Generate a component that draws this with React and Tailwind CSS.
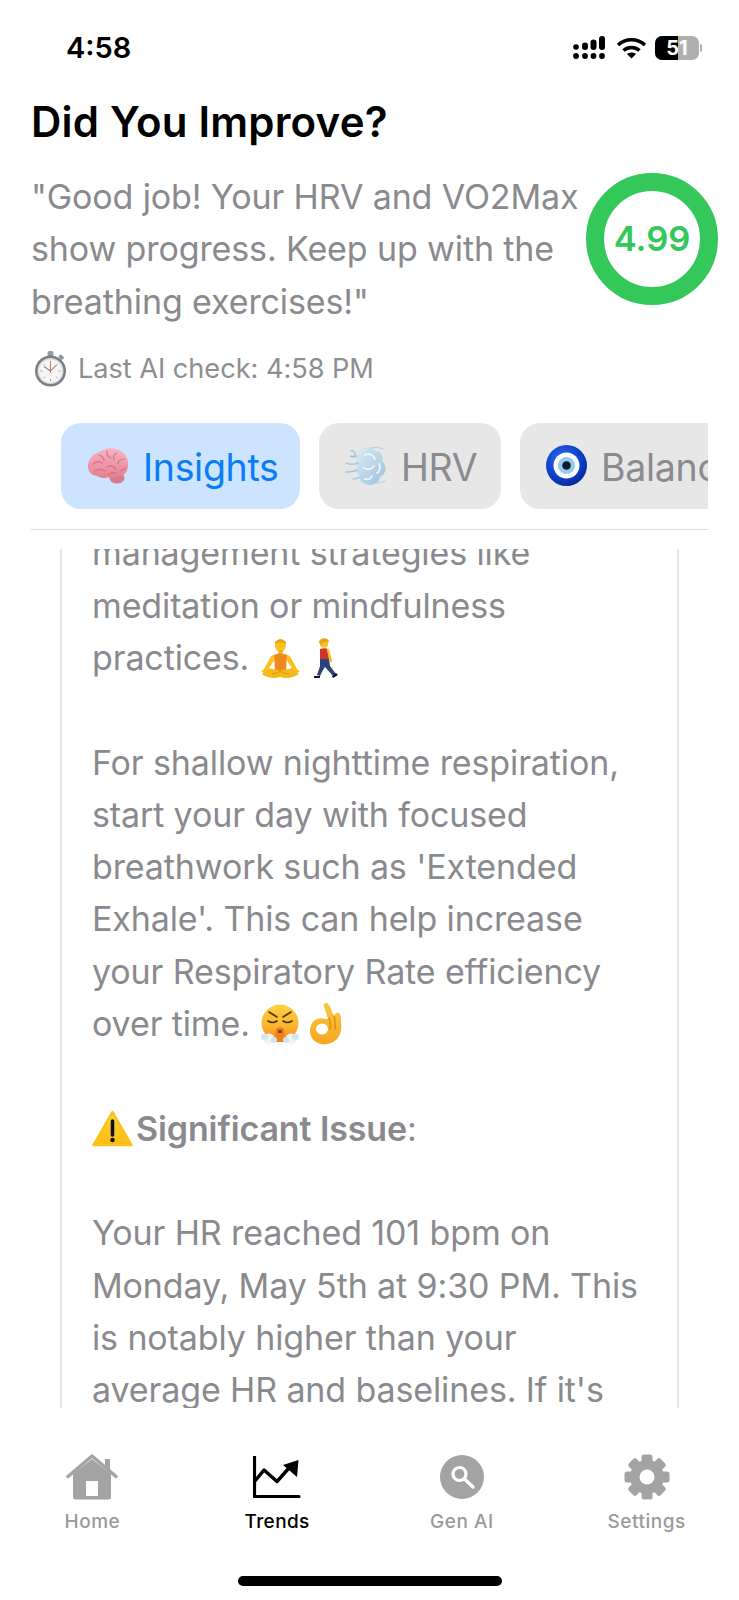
const font = { fontFamily: 'Inter, "Liberation Sans", sans-serif' };

function Signal() {
  return (
    <svg width="33" height="24" viewBox="0 0 33 24">
      <circle cx="3" cy="11" r="2.8" fill="#000" /><rect x="9" y="6.5" width="6" height="7.5" rx="3" fill="#000" /><rect x="17.5" y="3.5" width="6" height="10.5" rx="3" fill="#000" /><rect x="26" y="0" width="6" height="14" rx="3" fill="#000" />
      <circle cx="3" cy="20" r="2.9" fill="#000" /><circle cx="12" cy="20" r="2.9" fill="#000" /><circle cx="20.5" cy="20" r="2.9" fill="#000" /><circle cx="29" cy="20" r="2.9" fill="#000" />
    </svg>
  );
}
function Wifi() {
  return (
    <svg width="31" height="24" viewBox="0 0 31 24" fill="none" stroke="#000" strokeWidth="3.6">
      <path d="M2 9 C9.5 2 21.5 2 29 9" /><path d="M7.5 14.5 C12 10.5 19 10.5 23.5 14.5" />
      <path d="M15.5 22.5 L11 18 C13.5 16 17.5 16 20 18 Z" fill="#000" stroke="none" />
    </svg>
  );
}
function Stopwatch() {
  return (
    <svg width="33" height="36" viewBox="0 0 33 36">
      <rect x="13.500" y="0" width="6" height="5" rx="1.500" fill="#9a9ca3" /><rect x="15" y="4" width="3" height="3" fill="#777" />
      <rect x="25" y="4.500" width="5" height="3.500" rx="1" transform="rotate(42 27.500 6)" fill="#8f9198" />
      <circle cx="16.500" cy="20" r="15.500" fill="#7c7e85" /><circle cx="16.500" cy="20" r="13" fill="#d9dade" /><circle cx="16.500" cy="20" r="11.500" fill="#f7f5f1" />
      <path d="M16.500 10v2M16.500 28v2M6.500 20h2M24.500 20h2M9.500 13l1.200 1.200M23.500 13l-1.200 1.200M9.500 27l1.200-1.200M23.500 27l-1.200-1.200" stroke="#9a9a9a" strokeWidth="1" />
      <path d="M16.500 20L10 15.500M16.500 20L22.500 14" stroke="#666" strokeWidth="1" /><path d="M16.500 12v10" stroke="#c9574a" strokeWidth="0.800" />
    </svg>
  );
}
function Brain() {
  return (
    <svg width="42" height="38" viewBox="0 0 42 38">
      <defs><linearGradient id="brainG" x1="0" y1="0" x2="0" y2="1"><stop offset="0" stopColor="#f9b3c0" /><stop offset="1" stopColor="#e47e92" /></linearGradient></defs>
      <ellipse cx="30" cy="31" rx="7.500" ry="5.500" fill="#d9798c" />
      <path d="M1 21C0 13 6 7 12 5 17 1 26 0 32 3c6 3 10 9 9 16 0 6-4 10-9 10-3 3-8 3-11 1-3 2-8 1-11-1-5 0-8-4-9-8z" fill="url(#brainG)" />
      <path d="M6 17c3-3 7-3 9-1M12 8c3 1 5 3 5 6M20 4c-1 3 1 6 4 7M30 6c-3 1-4 4-3 7M37 12c-3 0-6 2-6 5M8 24c3-2 7-2 10 0M20 20c3-2 7-1 9 2M21 28c2-2 5-3 8-2M33 24c2-1 4-1 5-3" fill="none" stroke="#d2728a" strokeWidth="1.200" strokeLinecap="round" />
    </svg>
  );
}
function Dash() {
  return (
    <svg width="42" height="40" viewBox="0 0 42 40">
      <defs><linearGradient id="dashG" x1="0" y1="0" x2="1" y2="1"><stop offset="0" stopColor="#dcecf6" /><stop offset="1" stopColor="#9cc0da" /></linearGradient></defs>
      <path d="M15 4c4-4 12-4 15 1 6 0 9 5 7 10 5 4 5 13-2 16-1 6-8 10-14 7-5-1-7-5-6-9-5-2-5-6-2-9-3-3-3-7 0-9 0-3 0-5 2-7z" fill="url(#dashG)" />
      <path d="M20 9c4-2 9 0 10 4M34 18c2 3 1 7-2 9M19 22c4 2 8 1 10-2M20 33c3 1 6 0 7-3" fill="none" stroke="#eef6fb" strokeWidth="1.800" strokeLinecap="round" />
      <path d="M1 17c5 2 8 2 12 0M0 26c4 0 8 0 12-2M8 33c3 0 5-1 7-2M6 5a3 3 0 1 1-1 5c2 1 5 1 7 0" fill="none" stroke="#a9c7dc" strokeWidth="1.500" strokeLinecap="round" />
      <path d="M26 2c4-1 8-1 12 1M32 37c3 0 6-1 8-2" fill="none" stroke="#b9d3e5" strokeWidth="1.200" strokeLinecap="round" />
    </svg>
  );
}
function Nazar() {
  return (
    <svg width="41" height="41" viewBox="0 0 41 41">
      <defs><radialGradient id="nazarG" cx="0.4" cy="0.35" r="0.75"><stop offset="0" stopColor="#2b6cf0" /><stop offset="0.7" stopColor="#0a37c0" /><stop offset="1" stopColor="#06207c" /></radialGradient></defs>
      <circle cx="20.500" cy="20.500" r="20.500" fill="url(#nazarG)" /><circle cx="20.500" cy="20.500" r="13" fill="#fdfdfd" /><circle cx="20.500" cy="20.500" r="8.500" fill="#8fcdec" /><circle cx="20.500" cy="20.500" r="4.300" fill="#0e1830" />
    </svg>
  );
}
function Meditate() {
  return (
    <svg width="41" height="42" viewBox="0 0 41 42">
      <ellipse cx="20.500" cy="8.500" rx="5.500" ry="6.500" fill="#fcc21b" /><path d="M15 7c-1-6 12-6 11 0-3-2-8-2-11 0z" fill="#e8a21a" />
      <rect x="18.500" y="13" width="4" height="4" fill="#eeb018" />
      <path d="M14 18c4-2 9-2 13 0l-1 16H15z" fill="#f0891d" />
      <path d="M14 18c-2 0-3 1-4 3L4 32l-3 2 3 2 9-4-4-1 5-7zM27 18c2 0 3 1 4 3l6 11 3 2-3 2-9-4 4-1-5-7z" fill="#fcc21b" />
      <path d="M2 37c4-5 12-6 18-3 7-3 15-2 19 3-6 4-13 5-19 3-6 2-13 1-18-3z" fill="#f7b81c" />
      <path d="M12 37c3 0 6-1 8-3 3 2 6 3 9 3" fill="none" stroke="#d8950f" strokeWidth="1" />
    </svg>
  );
}
function Walker() {
  return (
    <svg width="24" height="41" viewBox="0 0 24 41">
      <circle cx="10" cy="5.500" r="4.300" fill="#fcc21b" /><path d="M5 5c0-6 10-6 10-1-3 0-7 0-7 3z" fill="#e6a61c" />
      <path d="M6 11c3-1 6-1 8 0l1 11H6z" fill="#cf352e" /><path d="M14 12l3 11" stroke="#fcc21b" strokeWidth="2.400" strokeLinecap="round" />
      <path d="M6 21h9l1 7 6 8-3 2-8-9-2 3-3 6-3-1 3-9z" fill="#2a4378" /><path d="M18 38l4-3 2 2-5 3zM0 38h6v2H0z" fill="#14141c" />
    </svg>
  );
}
function Steam() {
  return (
    <svg width="40" height="41" viewBox="0 0 40 41">
      <defs><linearGradient id="steamG" x1="0" y1="0" x2="0" y2="1"><stop offset="0" stopColor="#fcd23f" /><stop offset="0.6" stopColor="#fbb22d" /><stop offset="1" stopColor="#f38a1d" /></linearGradient></defs>
      <circle cx="20" cy="19" r="18.500" fill="url(#steamG)" />
      <path d="M9 8l8 5M31 8l-8 5M8 17c3 2 6 2 9 0M23 17c3 2 6 2 9 0" stroke="#4b3210" strokeWidth="1.600" fill="none" strokeLinecap="round" />
      <path d="M15.500 38V27c0-5 9-5 9 0v11z" fill="#ef7f1c" /><path d="M18 26h4v3h-4z" fill="#8a4412" />
      <circle cx="9" cy="35" r="5.500" fill="#eef5f9" /><circle cx="4.500" cy="33" r="3.500" fill="#d6e6ef" /><circle cx="31" cy="35" r="5.500" fill="#eef5f9" /><circle cx="35.500" cy="33" r="3.500" fill="#d6e6ef" />
      <circle cx="14" cy="36" r="3" fill="#cfe2ec" /><circle cx="26" cy="36" r="3" fill="#cfe2ec" />
    </svg>
  );
}
function Ok() {
  return (
    <svg width="32" height="42" viewBox="0 0 32 42">
      <defs><linearGradient id="okG" x1="0" y1="0" x2="0" y2="1"><stop offset="0" stopColor="#fcc83a" /><stop offset="1" stopColor="#f6a623" /></linearGradient></defs>
      <path d="M14 3c-1-2 1-3 3-3 2 1 4 5 5 9l2 4c1-3 3-4 5-3 2 2 2 6 2 10 1 5 0 12-4 16-5 5-13 7-19 4C3 38 0 33 0 28c0-4 1-8 5-11 3-2 7-2 10-1l3 0c-1-4-3-9-4-13z" fill="url(#okG)" />
      <ellipse cx="12" cy="26" rx="6" ry="5.500" fill="#fff" />
      <path d="M19 15c1 3 2 7 1 11M24 13c1 4 2 8 1 13" fill="none" stroke="#d9890f" strokeWidth="1.300" strokeLinecap="round" />
    </svg>
  );
}
function Warn() {
  return (
    <svg width="41" height="37" viewBox="0 0 41 37">
      <defs><linearGradient id="warnG" x1="0" y1="0" x2="0" y2="1"><stop offset="0" stopColor="#fdd835" /><stop offset="1" stopColor="#fbbc12" /></linearGradient></defs>
      <path d="M20.500 2L39.500 35H1.500z" fill="url(#warnG)" stroke="#fbc21a" strokeWidth="2.500" strokeLinejoin="round" />
      <path d="M20.500 11v14" stroke="#111" strokeWidth="3.600" strokeLinecap="round" /><circle cx="20.500" cy="30" r="2.300" fill="#111" />
    </svg>
  );
}
function HomeIcon() {
  return (
    <svg width="52" height="46" viewBox="0 0 52 46">
      <path d="M7 20L26 5l19 15v23a2.500 2.500 0 0 1-2.500 2.500h-33A2.500 2.500 0 0 1 7 43z" fill="#a3a3a3" />
      <path d="M2 22.500L26 2l24 20.500" fill="none" stroke="#a3a3a3" strokeWidth="3.400" strokeLinecap="round" strokeLinejoin="round" />
      <path d="M39 5h5v13l-5-4z" fill="#a3a3a3" /><rect x="20" y="27" width="12" height="15" fill="#fff" />
    </svg>
  );
}
function TrendIcon() {
  return (
    <svg width="48" height="42" viewBox="0 0 48 42" fill="none" stroke="#000" strokeWidth="3.200">
      <path d="M1.500 0v40.500H46" strokeLinecap="round" strokeLinejoin="round" />
      <path d="M2 25L11 14l13 11.500L36 12" strokeWidth="3.400" strokeLinejoin="round" />
      <path d="M30 9l15.500-5L44 21z" fill="#000" stroke="none" />
    </svg>
  );
}
function GenIcon() {
  return (
    <svg width="44" height="44" viewBox="0 0 44 44">
      <circle cx="22" cy="22" r="22" fill="#a3a3a3" />
      <circle cx="19.500" cy="19" r="6.500" fill="none" stroke="#fff" strokeWidth="3.200" /><path d="M24.500 24L33 32" stroke="#fff" strokeWidth="3.400" strokeLinecap="round" />
    </svg>
  );
}
function GearIcon() {
  const teeth = [0, 45, 90, 135, 180, 225, 270, 315];
  return (
    <svg width="46" height="46" viewBox="0 0 46 46">
      {teeth.map((a) => <rect key={a} x="17.500" y="0.500" width="11" height="12" rx="2.500" fill="#a3a3a3" transform={`rotate(${a} 23 23)`} />)}
      <circle cx="23" cy="23" r="17" fill="#a3a3a3" /><circle cx="23" cy="23" r="7.500" fill="#fff" />
    </svg>
  );
}

function Tab({ active, icon, label, className }) {
  return (
    <div className={`flex h-[86px] shrink-0 items-center gap-[14px] rounded-[20px] pl-[26px] ${active ? 'bg-[#cce4ff] text-[#0a7cf5]' : 'bg-[#e7e7e7] text-[#8b8b8f]'} ${className}`}>
      {icon}
      <span className="pt-[3px] text-[37.500px] leading-none tracking-[-0.3px]">{label}</span>
    </div>
  );
}

function NavItem({ icon, label, active }) {
  return (
    <div className="flex flex-col items-center">
      <div className="flex h-[46px] items-center justify-center">{icon}</div>
      <span className={`mt-[10px] text-[19px] font-medium leading-[24px] ${active ? 'tracking-[0.4px] text-black' : 'tracking-[0.55px] text-[#9a9a9a]'}`}>{label}</span>
    </div>
  );
}

export default function App() {
  return (
    <div style={font} className="flex h-[1600px] w-[739px] flex-col overflow-hidden bg-white">
      <div className="flex h-[95px] shrink-0 items-center justify-between pl-[66px] pr-[37px]">
        <span className="text-[29px] font-semibold leading-none">4:58</span>
        <div className="flex items-center">
          <Signal />
          <div className="ml-[10px]"><Wifi /></div>
          <div className="relative ml-[8px] flex h-[24px] w-[44px] overflow-hidden rounded-[7px] bg-[#b0b0b0] text-[20px] font-bold leading-[24px] text-white">
            <div className="w-[23px] bg-black" />
            <span className="absolute inset-0 text-center">51</span>
          </div>
          <div className="ml-[1px] h-[8px] w-[2px] rounded-r bg-[#b0b0b0]" />
        </div>
      </div>

      <h1 className="mt-[3px] px-[31px] text-[42px] font-semibold leading-[48px] tracking-[0.2px] text-black">Did You Improve?</h1>

      <div className="mt-[25px] flex items-start pl-[31px] pr-[4px]">
        <p className="w-[554px] shrink-0 text-[34px] leading-[52.300px] tracking-[-0.12px] text-[#8a8a8e]">
          "Good job! Your HRV and VO2Max<br />show progress. Keep up with the<br />breathing exercises!"
        </p>
        <div className="ml-[1px] mt-[2px] flex h-[132px] w-[132px] shrink-0 items-center justify-center rounded-full border-[18px] border-[#34c759] text-[34.500px] font-semibold text-[#34c759]">
          4.99
        </div>
      </div>

      <div className="mt-[22px] flex items-center pl-[34px] pr-[32px]">
        <Stopwatch />
        <span className="ml-[11px] text-[27.200px] leading-[38px] tracking-[-0.05px] text-[#8e8e92]">Last AI check: 4:58 PM</span>
      </div>

      <div className="mx-[31px] mt-[35px] flex gap-[19px] overflow-hidden border-b border-[#dcdcdc] pb-[20px] pl-[30px]">
        <Tab active className="w-[239px]" icon={<Brain />} label="Insights" />
        <Tab className="w-[182px]" icon={<Dash />} label="HRV" />
        <Tab className="w-[260px]" icon={<Nazar />} label="Balance" />
      </div>

      <div className="mx-[60px] mt-[19px] h-[859px] shrink-0 overflow-hidden border-x-2 border-[#e5e5e5]">
        <div className="mt-[-21.500px] whitespace-nowrap pl-[30px] text-[34px] leading-[52.300px] tracking-[-0.12px] text-[#8a8a8e]">
          <p>management strategies like</p>
          <p>meditation or mindfulness</p>
          <p className="flex items-center">practices.<span className="ml-[11px]"><Meditate /></span><span className="ml-[13px]"><Walker /></span></p>
          <p className="mt-[52.300px]">For shallow nighttime respiration,<br />start your day with focused<br />breathwork such as 'Extended<br />Exhale'. This can help increase<br />your Respiratory Rate efficiency</p>
          <p className="flex items-center">over time.<span className="ml-[10px]"><Steam /></span><span className="ml-[10px]"><Ok /></span></p>
          <p className="mt-[52.300px] flex items-center"><Warn /><span className="ml-[3px] font-semibold">Significant Issue</span>:</p>
          <p className="mt-[52.300px]">Your HR reached 101 bpm on<br />Monday, May 5th at 9:30 PM. This<br />is notably higher than your<br />average HR and baselines. If it's</p>
        </div>
      </div>

      <div className="mt-[46px] grid grid-cols-4">
        <NavItem icon={<HomeIcon />} label="Home" />
        <NavItem active icon={<TrendIcon />} label="Trends" />
        <NavItem icon={<GenIcon />} label="Gen AI" />
        <NavItem icon={<GearIcon />} label="Settings" />
      </div>

      <div className="mx-auto mt-[42px] h-[10px] w-[264px] rounded-full bg-black" />
    </div>
  );
}
